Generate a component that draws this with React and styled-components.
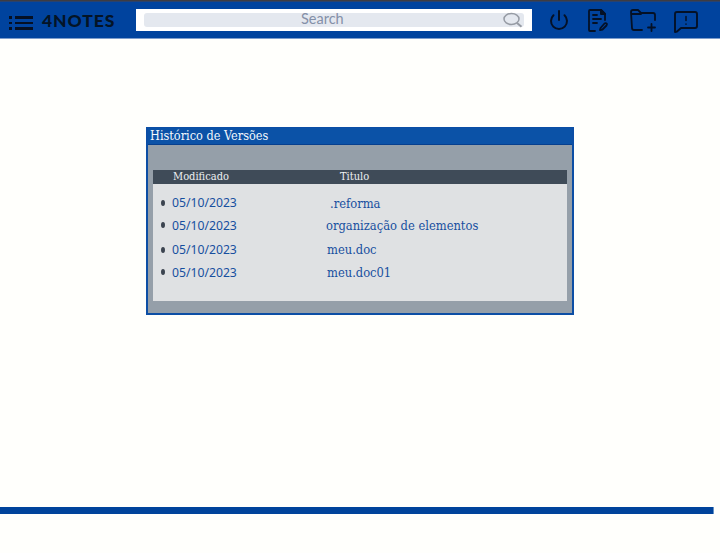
import React from "react";
import styled, { createGlobalStyle } from "styled-components";

const GlobalStyle = createGlobalStyle`
  * { box-sizing: border-box; }
  body { margin: 0; background: #fffffc; overflow: hidden; }
`;

const Page = styled.div`
  height: 553px;
  display: flex;
  flex-direction: column;
  background: #fffffc;
`;

const Header = styled.header`
  height: 39px;
  flex: none;
  display: flex;
  align-items: flex-start;
  background: #00439e;
  border-top: 1px solid #3d3c42;
  border-bottom: 1px solid #7d9dcc;
  box-shadow: inset 0 1px #29426e;
`;

const MenuIcon = styled.svg`
  flex: none;
  width: 26px;
  height: 16px;
  margin: 14px 0 0 8px;
`;

const Brand = styled.div`
  width: 94px;
  margin: 8px 0 0 8px;
  font: 900 17.5px/24px Lato, sans-serif;
  letter-spacing: 0.95px;
  color: #041426;
  white-space: nowrap;
`;

const SearchFrame = styled.div`
  width: 396px;
  height: 22px;
  flex: none;
  margin-top: 8px;
  padding: 4px 8px;
  background: #fff;
`;

const SearchField = styled.div`
  height: 14px;
  display: flex;
  align-items: center;
  border-radius: 3px;
  background: #e4e8ef;
`;

const SearchText = styled.span`
  margin: -2px 0 0 157px;
  width: 203px;
  font: 14.5px/14px Lato, sans-serif;
  color: #8490a8;
`;

const SearchIcon = styled.svg`
  width: 21px;
  height: 16px;
  flex: none;
`;

const Actions = styled.div`
  display: flex;
  margin: 6px 0 0 16px;
`;

const ActionIcon = styled.svg`
  flex: none;
  width: ${(p) => p.$width}px;
  height: 27px;
  margin-right: ${(p) => p.$gap}px;
  fill: none;
  stroke: #041126;
  stroke-width: 2;
  stroke-linecap: round;
  stroke-linejoin: round;
`;

const Main = styled.main`
  height: 468px;
  flex: none;
  padding: 88px 0 0 146px;
`;

const Window = styled.section`
  width: 428px;
  height: 188px;
  border: 2px solid #0c4ea5;
  border-top-width: 1px;
  background: #959fa9;
`;

const TitleBar = styled.h1`
  height: 17px;
  margin: 0;
  padding-left: 2px;
  background: #0b52a7;
  border-bottom: 1px solid #063f8e;
  color: #f2f7fc;
  font: 12.6px/15px "DejaVu Serif Condensed", "DejaVu Serif", serif;
`;

const Table = styled.div`
  width: 414px;
  height: 131px;
  margin: 25px 0 0 5px;
  background: #dfe1e3;
`;

const TableHead = styled.div`
  height: 14px;
  display: grid;
  grid-template-columns: 167px 1fr;
  padding-left: 20px;
  background: #3f4b58;
  color: #eef0f2;
  font: 11px/14px "DejaVu Serif Condensed", "DejaVu Serif", serif;
`;

const Rows = styled.ul`
  display: grid;
  grid-template-rows: 22px 25px 22px 22px;
  margin: 0;
  padding: 8px 0 0;
  list-style: none;
`;

const Row = styled.li`
  display: flex;
  align-items: flex-start;
  color: #174f9f;
  white-space: nowrap;
`;

const Bullet = styled.span`
  width: 4px;
  height: 6px;
  flex: none;
  margin: 8px 7px 0 8px;
  border-radius: 50%;
  background: #3c4450;
`;

const DateText = styled.time`
  width: 153px;
  padding-top: ${(p) => p.$drop}px;
  font: 12.2px/22px "Noto Sans", sans-serif;
`;

const DocTitle = styled.span`
  margin-left: ${(p) => p.$indent}px;
  padding-top: ${(p) => p.$drop}px;
  font: 12.8px/22px "DejaVu Serif Condensed", "DejaVu Serif", serif;
`;

const FooterLine = styled.footer`
  width: 714px;
  height: 7px;
  flex: none;
  background: #00439b;
  border-right: 1px solid #6593c7;
`;

const versions = [
  { date: "05/10/2023", title: ".reforma", indent: 5, dateDrop: 0, titleDrop: 1 },
  { date: "05/10/2023", title: "organização de elementos", indent: 1, dateDrop: 1, titleDrop: 1 },
  { date: "05/10/2023", title: "meu.doc", indent: 2, dateDrop: 0, titleDrop: 0 },
  { date: "05/10/2023", title: "meu.doc01", indent: 2, dateDrop: 1, titleDrop: 1 },
];

export default function App() {
  return (
    <>
      <GlobalStyle />
      <Page>
        <Header>
          <MenuIcon viewBox="0 0 26 16" fill="#051024">
            <path d="M1 1h3v3H1zM1 7h3v2H1zM1 12h3v3H1zM7 1h18v3H7zM7 7h18v2H7zM7 12h18v3H7z" />
          </MenuIcon>
          <Brand>4NOTES</Brand>
          <SearchFrame>
            <SearchField>
              <SearchText>Search</SearchText>
              <SearchIcon viewBox="0 0 21 16" fill="none" stroke="#969ba4" strokeWidth="1.5">
                <ellipse cx="8.500" cy="7" rx="7.500" ry="5.500" />
                <path d="m14 11 4.500 3.700" strokeWidth="2" />
              </SearchIcon>
            </SearchField>
          </SearchFrame>
          <Actions>
            <ActionIcon $width={22} $gap={16} viewBox="0 0 22 27">
              <path d="M11 4v9M5.500 8.200a8 8 0 1 0 11 0" />
            </ActionIcon>
            <ActionIcon $width={23} $gap={20} viewBox="0 0 23 27">
              <path d="M9 24H4q-1 0-1-1V4q0-1 1-1h11l4 4v6M7 8h4M7 12h8M7 16h4" strokeWidth="1.8" />
              <path d="M15 3v4h4z" fill="#041126" />
              <path d="m14.500 21 4-4.500q1.500-1 2.500.5l-.5 1.500-4 4-2.500.5z" strokeWidth="1.800" />
            </ActionIcon>
            <ActionIcon $width={27} $gap={17} viewBox="0 0 27 27">
              <path d="M13 23H5q-2 0-2-2L2 5q0-2 2-2h5l3 3h12q2 0 2 2v5M2 7h10M22.500 17v7M19 20.500h7" strokeWidth="1.800" />
            </ActionIcon>
            <ActionIcon $width={26} $gap={0} viewBox="0 0 26 27">
              <path d="M2 25V7q0-2 2-2h18q2 0 2 2v12q0 2-2 2H8l-4 3.500z" strokeWidth="1.900" />
              <path d="M13 9.500v4M13 17v.2" strokeWidth="1.500" />
            </ActionIcon>
          </Actions>
        </Header>
        <Main>
          <Window>
            <TitleBar>Histórico de Versões</TitleBar>
            <Table>
              <TableHead>
                <span>Modificado</span>
                <span>Titulo</span>
              </TableHead>
              <Rows>
                {versions.map((v) => (
                  <Row key={v.title}>
                    <Bullet />
                    <DateText $drop={v.dateDrop}>{v.date}</DateText>
                    <DocTitle $indent={v.indent} $drop={v.titleDrop}>
                      {v.title}
                    </DocTitle>
                  </Row>
                ))}
              </Rows>
            </Table>
          </Window>
        </Main>
        <FooterLine />
      </Page>
    </>
  );
}
